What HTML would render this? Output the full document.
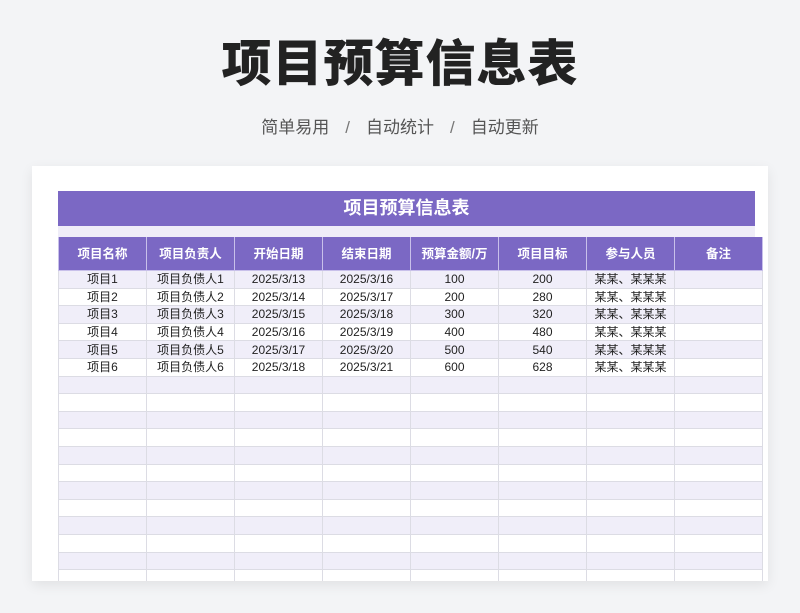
<!DOCTYPE html><html><head><meta charset="utf-8"><style>
body{margin:0;width:800px;height:613px;background:#f3f4f6;font-family:"Liberation Sans","Noto Sans CJK SC",sans-serif;position:relative;overflow:hidden}
h1{position:absolute;top:32px;left:0;width:800px;text-align:center;margin:0;font-size:50px;line-height:64px;font-weight:900;color:#222;letter-spacing:1px}
.sub{position:absolute;top:113px;width:800px;text-align:center;font-size:17px;color:#555;word-spacing:0}
.sub span{margin:0 16px;color:#777}
.card{position:absolute;left:32px;top:166px;width:736px;height:415px;background:#fff;box-shadow:0 4px 12px rgba(0,0,0,.08);overflow:hidden}
.tb{position:absolute;left:26px;top:25px;width:697px;height:35px;background:#7b68c4;color:#fff;font-weight:bold;font-size:18px;text-align:center;line-height:35px}
.gap{position:absolute;left:26px;top:60px;width:697px;height:11px;background:#efedf8}
table{position:absolute;left:26px;top:71px;border-collapse:collapse;table-layout:fixed;width:697px}
td,th{border:1px solid #dcdce4;width:87px;height:16.6px;padding:0;text-align:center;font-size:12px;color:#222;line-height:16px}
th{background:#7b68c4;color:#fff;font-size:12.5px;height:33px;border-color:#c8c0ea;border-top:none}
tr:nth-child(even) td{background:#f0eef9}
</style></head><body>
<h1>项目预算信息表</h1>
<div class="sub">简单易用<span>/</span>自动统计<span>/</span>自动更新</div>
<div class="card"><div class="tb">项目预算信息表</div><div class="gap"></div>
<table><tr><th>项目名称</th><th>项目负责人</th><th>开始日期</th><th>结束日期</th><th>预算金额/万</th><th>项目目标</th><th>参与人员</th><th>备注</th></tr>
<tr><td>项目1</td><td>项目负债人1</td><td>2025/3/13</td><td>2025/3/16</td><td>100</td><td>200</td><td>某某、某某某</td><td></td></tr>
<tr><td>项目2</td><td>项目负债人2</td><td>2025/3/14</td><td>2025/3/17</td><td>200</td><td>280</td><td>某某、某某某</td><td></td></tr>
<tr><td>项目3</td><td>项目负债人3</td><td>2025/3/15</td><td>2025/3/18</td><td>300</td><td>320</td><td>某某、某某某</td><td></td></tr>
<tr><td>项目4</td><td>项目负债人4</td><td>2025/3/16</td><td>2025/3/19</td><td>400</td><td>480</td><td>某某、某某某</td><td></td></tr>
<tr><td>项目5</td><td>项目负债人5</td><td>2025/3/17</td><td>2025/3/20</td><td>500</td><td>540</td><td>某某、某某某</td><td></td></tr>
<tr><td>项目6</td><td>项目负债人6</td><td>2025/3/18</td><td>2025/3/21</td><td>600</td><td>628</td><td>某某、某某某</td><td></td></tr>
<tr><td></td><td></td><td></td><td></td><td></td><td></td><td></td><td></td></tr>
<tr><td></td><td></td><td></td><td></td><td></td><td></td><td></td><td></td></tr>
<tr><td></td><td></td><td></td><td></td><td></td><td></td><td></td><td></td></tr>
<tr><td></td><td></td><td></td><td></td><td></td><td></td><td></td><td></td></tr>
<tr><td></td><td></td><td></td><td></td><td></td><td></td><td></td><td></td></tr>
<tr><td></td><td></td><td></td><td></td><td></td><td></td><td></td><td></td></tr>
<tr><td></td><td></td><td></td><td></td><td></td><td></td><td></td><td></td></tr>
<tr><td></td><td></td><td></td><td></td><td></td><td></td><td></td><td></td></tr>
<tr><td></td><td></td><td></td><td></td><td></td><td></td><td></td><td></td></tr>
<tr><td></td><td></td><td></td><td></td><td></td><td></td><td></td><td></td></tr>
<tr><td></td><td></td><td></td><td></td><td></td><td></td><td></td><td></td></tr>
<tr><td></td><td></td><td></td><td></td><td></td><td></td><td></td><td></td></tr>
</table></div>
</body></html>
